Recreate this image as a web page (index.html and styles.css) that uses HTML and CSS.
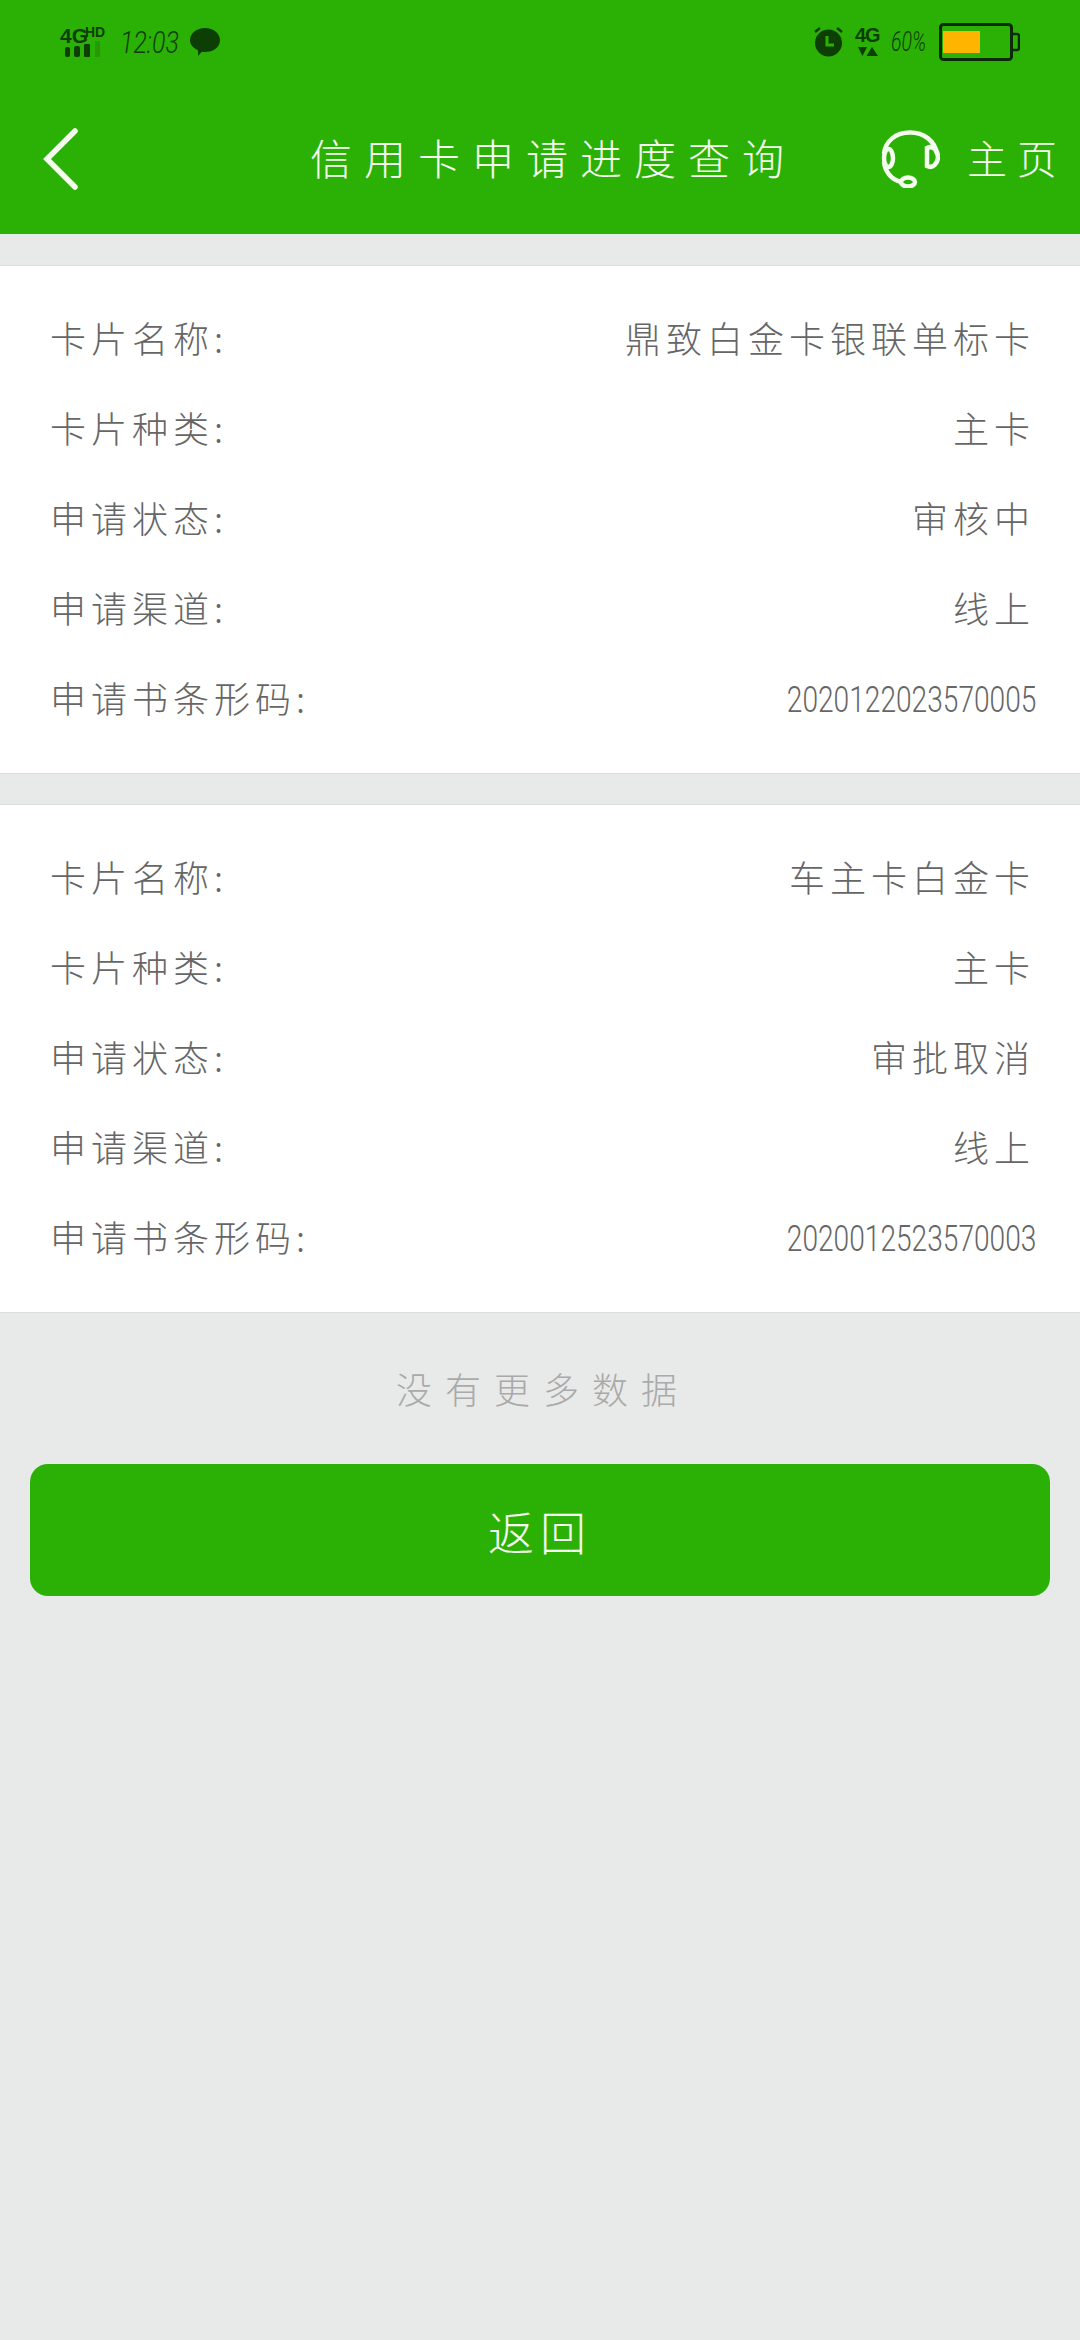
FILE: index.html
```html
<!DOCTYPE html>
<html lang="zh-CN">
<head>
<meta charset="utf-8">
<title>信用卡申请进度查询</title>
<link rel="stylesheet" href="styles.css">
</head>
<body>
<header class="header">
  <div class="status">
    <div class="status-left">
      <svg class="ic" width="46" height="30" viewBox="0 0 46 30">
        <text x="0" y="16" class="sig-4g">4G</text>
        <text x="25" y="10" class="sig-hd">HD</text>
        <rect x="5" y="20" width="5" height="10" rx="2" fill="#0d3f05"/>
        <rect x="14" y="19" width="6" height="11" rx="2" fill="#0d3f05"/>
        <rect x="24" y="17" width="6" height="13" rx="1" fill="#0d3f05"/>
        <rect x="35" y="14" width="5" height="16" rx="1" fill="#0d3f05" opacity=".2"/>
      </svg>
      <span class="time">12:03</span>
      <svg width="30" height="28" viewBox="0 0 30 28"><path d="M15 0C23.300 0 30 5.300 30 12.200S23.300 24 15 24C13.800 24 12.700 23.900 11.700 23.700L8.200 28 7.800 21.900C3.100 20 0 16.400 0 12.200 0 5.300 6.700 0 15 0Z" fill="#0d3f05"/></svg>
    </div>
    <div class="status-right">
      <svg width="29" height="30" viewBox="0 0 29 30">
        <circle cx="14.500" cy="16" r="13.500" fill="#0d3f05"/>
        <path d="M1 5 6 1M28 5 23 1" stroke="#0d3f05" stroke-width="2.500" fill="none"/>
        <path d="M13 9V18H20" stroke="#2bb106" stroke-width="3" fill="none"/>
      </svg>
      <svg class="ic" width="24" height="30" viewBox="0 0 24 30">
        <text x="0" y="15" class="sig-4g sig-4g-small">4G</text>
        <path d="M3 20H12L7.500 29ZM11.500 29 17 20 23 29Z" fill="#0d3f05"/>
      </svg>
      <span class="percent">60%</span>
      <svg width="81" height="38" viewBox="0 0 81 38">
        <rect x="1.500" y="1.500" width="71" height="35" rx="3" fill="none" stroke="#0d2a08" stroke-width="3"/>
        <rect x="4" y="8" width="37" height="22" fill="#ffb400"/>
        <path d="M73 11H78Q80 11 80 13V25Q80 27 78 27H73" fill="none" stroke="#0d2a08" stroke-width="2.500"/>
      </svg>
    </div>
  </div>
  <nav class="nav">
    <svg class="back" width="36" height="62" viewBox="0 0 36 62"><path d="M33 3 5 31 33 59" fill="none" stroke="#f4fbef" stroke-width="5.500" stroke-linecap="round"/></svg>
    <h1 class="title">信用卡申请进度查询</h1>
    <svg class="headset" width="59" height="58" viewBox="0 0 59 58" fill="none" stroke="#f4fbef" stroke-width="4.500">
      <path d="M3 24C4 11 15 2.500 29 2.500S54 11 56 24"/>
      <path d="M3 32C4 42 11 50 20 52"/>
      <ellipse cx="7.500" cy="28" rx="4.500" ry="9"/>
      <path d="M46 18C52 15 57 21 57 27S52 39 46 36Z"/>
      <ellipse cx="27" cy="52" rx="7" ry="4.500"/>
    </svg>
    <a class="home">主页</a>
  </nav>
</header>

<main>
  <section class="card">
    <div class="row"><span class="label">卡片名称:</span><span class="value">鼎致白金卡银联单标卡</span></div>
    <div class="row"><span class="label">卡片种类:</span><span class="value">主卡</span></div>
    <div class="row"><span class="label">申请状态:</span><span class="value">审核中</span></div>
    <div class="row"><span class="label">申请渠道:</span><span class="value">线上</span></div>
    <div class="row"><span class="label">申请书条形码:</span><span class="num">2020122023570005</span></div>
  </section>
  <section class="card">
    <div class="row"><span class="label">卡片名称:</span><span class="value">车主卡白金卡</span></div>
    <div class="row"><span class="label">卡片种类:</span><span class="value">主卡</span></div>
    <div class="row"><span class="label">申请状态:</span><span class="value">审批取消</span></div>
    <div class="row"><span class="label">申请渠道:</span><span class="value">线上</span></div>
    <div class="row"><span class="label">申请书条形码:</span><span class="num">2020012523570003</span></div>
  </section>
  <p class="more">没有更多数据</p>
  <button class="return">返回</button>
</main>
</body>
</html>
```
FILE: styles.css
```css
* { box-sizing: border-box; }
html, body { margin: 0; padding: 0; }
body {
  width: 1080px;
  height: 2340px;
  background: #e8e9e9;
  font-family: "Noto Sans CJK SC", "Noto Sans", sans-serif;
  font-weight: 300;
  overflow: hidden;
}
.header { background: #2bb106; height: 234px; }
.status {
  height: 84px;
  padding: 0 60px;
  display: flex;
  justify-content: space-between;
  align-items: center;
}
.status-left, .status-right { display: flex; align-items: center; }
.status-left { gap: 14px; }
.status-right { gap: 12px; }
.ic { overflow: visible; }
.sig-4g { font: 700 21px "Liberation Sans", sans-serif; fill: #0d3f05; }
.sig-4g-small { font-size: 20px; letter-spacing: -1px; }
.sig-hd { font: 700 14px "Liberation Sans", sans-serif; fill: #0d3f05; }
.time, .percent {
  font-family: "Roboto", sans-serif;
  font-weight: 300;
  font-style: italic;
  color: #0d3f05;
  line-height: 30px;
  transform-origin: left center;
}
.time { font-size: 32px; width: 56px; transform: scaleX(.78); }
.percent { font-size: 28px; width: 36px; transform: scaleX(.7); }
.nav { height: 150px; display: flex; align-items: center; color: #f4fbef; }
.back { margin-left: 42px; flex: none; }
.title {
  margin: 0 0 5px 232px;
  width: 476px;
  font-size: 42px;
  font-weight: 300;
  letter-spacing: 12px;
  white-space: nowrap;
}
.headset { margin-left: 95px; flex: none; }
.home { margin: 0 0 5px 27px; font-size: 40px; letter-spacing: 10px; white-space: nowrap; }
main { display: block; }
.card {
  height: 509px;
  margin-top: 30px;
  padding: 28px 0;
  background: #fff;
  border-top: 1px solid #dcdddd;
  border-bottom: 1px solid #dcdddd;
}
.card:first-child { margin-top: 31px; }
.row {
  height: 90px;
  padding: 0 50px;
  display: flex;
  justify-content: space-between;
  align-items: center;
  color: #666;
  font-size: 36px;
  letter-spacing: 5px;
  white-space: nowrap;
}
.label, .value { margin-bottom: 5px; }
.value { margin-right: -5px; }
.num {
  font-family: "Roboto", sans-serif;
  font-weight: 300;
  font-size: 37px;
  letter-spacing: 0;
  margin-right: -6px;
  transform: scaleX(.76);
  transform-origin: right center;
}
.more {
  margin: 0;
  height: 150px;
  display: flex;
  align-items: center;
  justify-content: center;
  color: #aaa;
  font-size: 36px;
  letter-spacing: 13px;
  padding-left: 6px;
}
.return {
  display: flex;
  align-items: center;
  justify-content: center;
  width: 1020px;
  height: 132px;
  margin: 1px 30px 0;
  border: 0;
  border-radius: 18px;
  background: #2bb106;
  color: #f4fbef;
  font: inherit;
  font-size: 46px;
  letter-spacing: 6px;
}
```
